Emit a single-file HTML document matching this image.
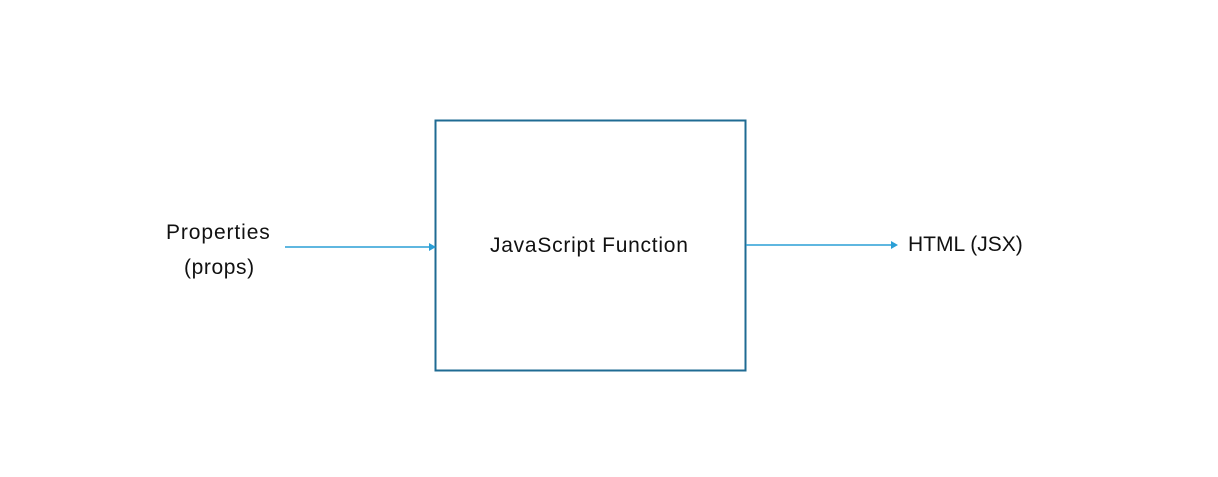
<!DOCTYPE html>
<html><head><style>
body{margin:0;width:1218px;height:477px;background:#fff;position:relative;overflow:hidden;font-family:"Liberation Sans",sans-serif;color:#111;}
.t{position:absolute;font-size:21px;white-space:nowrap;line-height:24px}
</style></head><body>
<svg width="1218" height="477" style="position:absolute;left:0;top:0">
<rect x="435.5" y="120.5" width="310" height="250" fill="none" stroke="#1f6b93" stroke-width="2"/>
<line x1="285" y1="247" x2="430" y2="247" stroke="#2a9fd6" stroke-width="1.5"/>
<polygon points="429,243 436,247 429,251" fill="#2a9fd6"/>
<line x1="746" y1="245" x2="892" y2="245" stroke="#2a9fd6" stroke-width="1.5"/>
<polygon points="891,241 898,245 891,249" fill="#2a9fd6"/>
</svg>
<div class="t" style="left:166px;top:221px;letter-spacing:0.9px">Properties</div>
<div class="t" style="left:184px;top:256px;letter-spacing:0.6px">(props)</div>
<div class="t" style="left:490px;top:234px;letter-spacing:0.75px">JavaScript Function</div>
<div class="t" style="left:908px;top:233px">HTML (JSX)</div>
</body></html>
